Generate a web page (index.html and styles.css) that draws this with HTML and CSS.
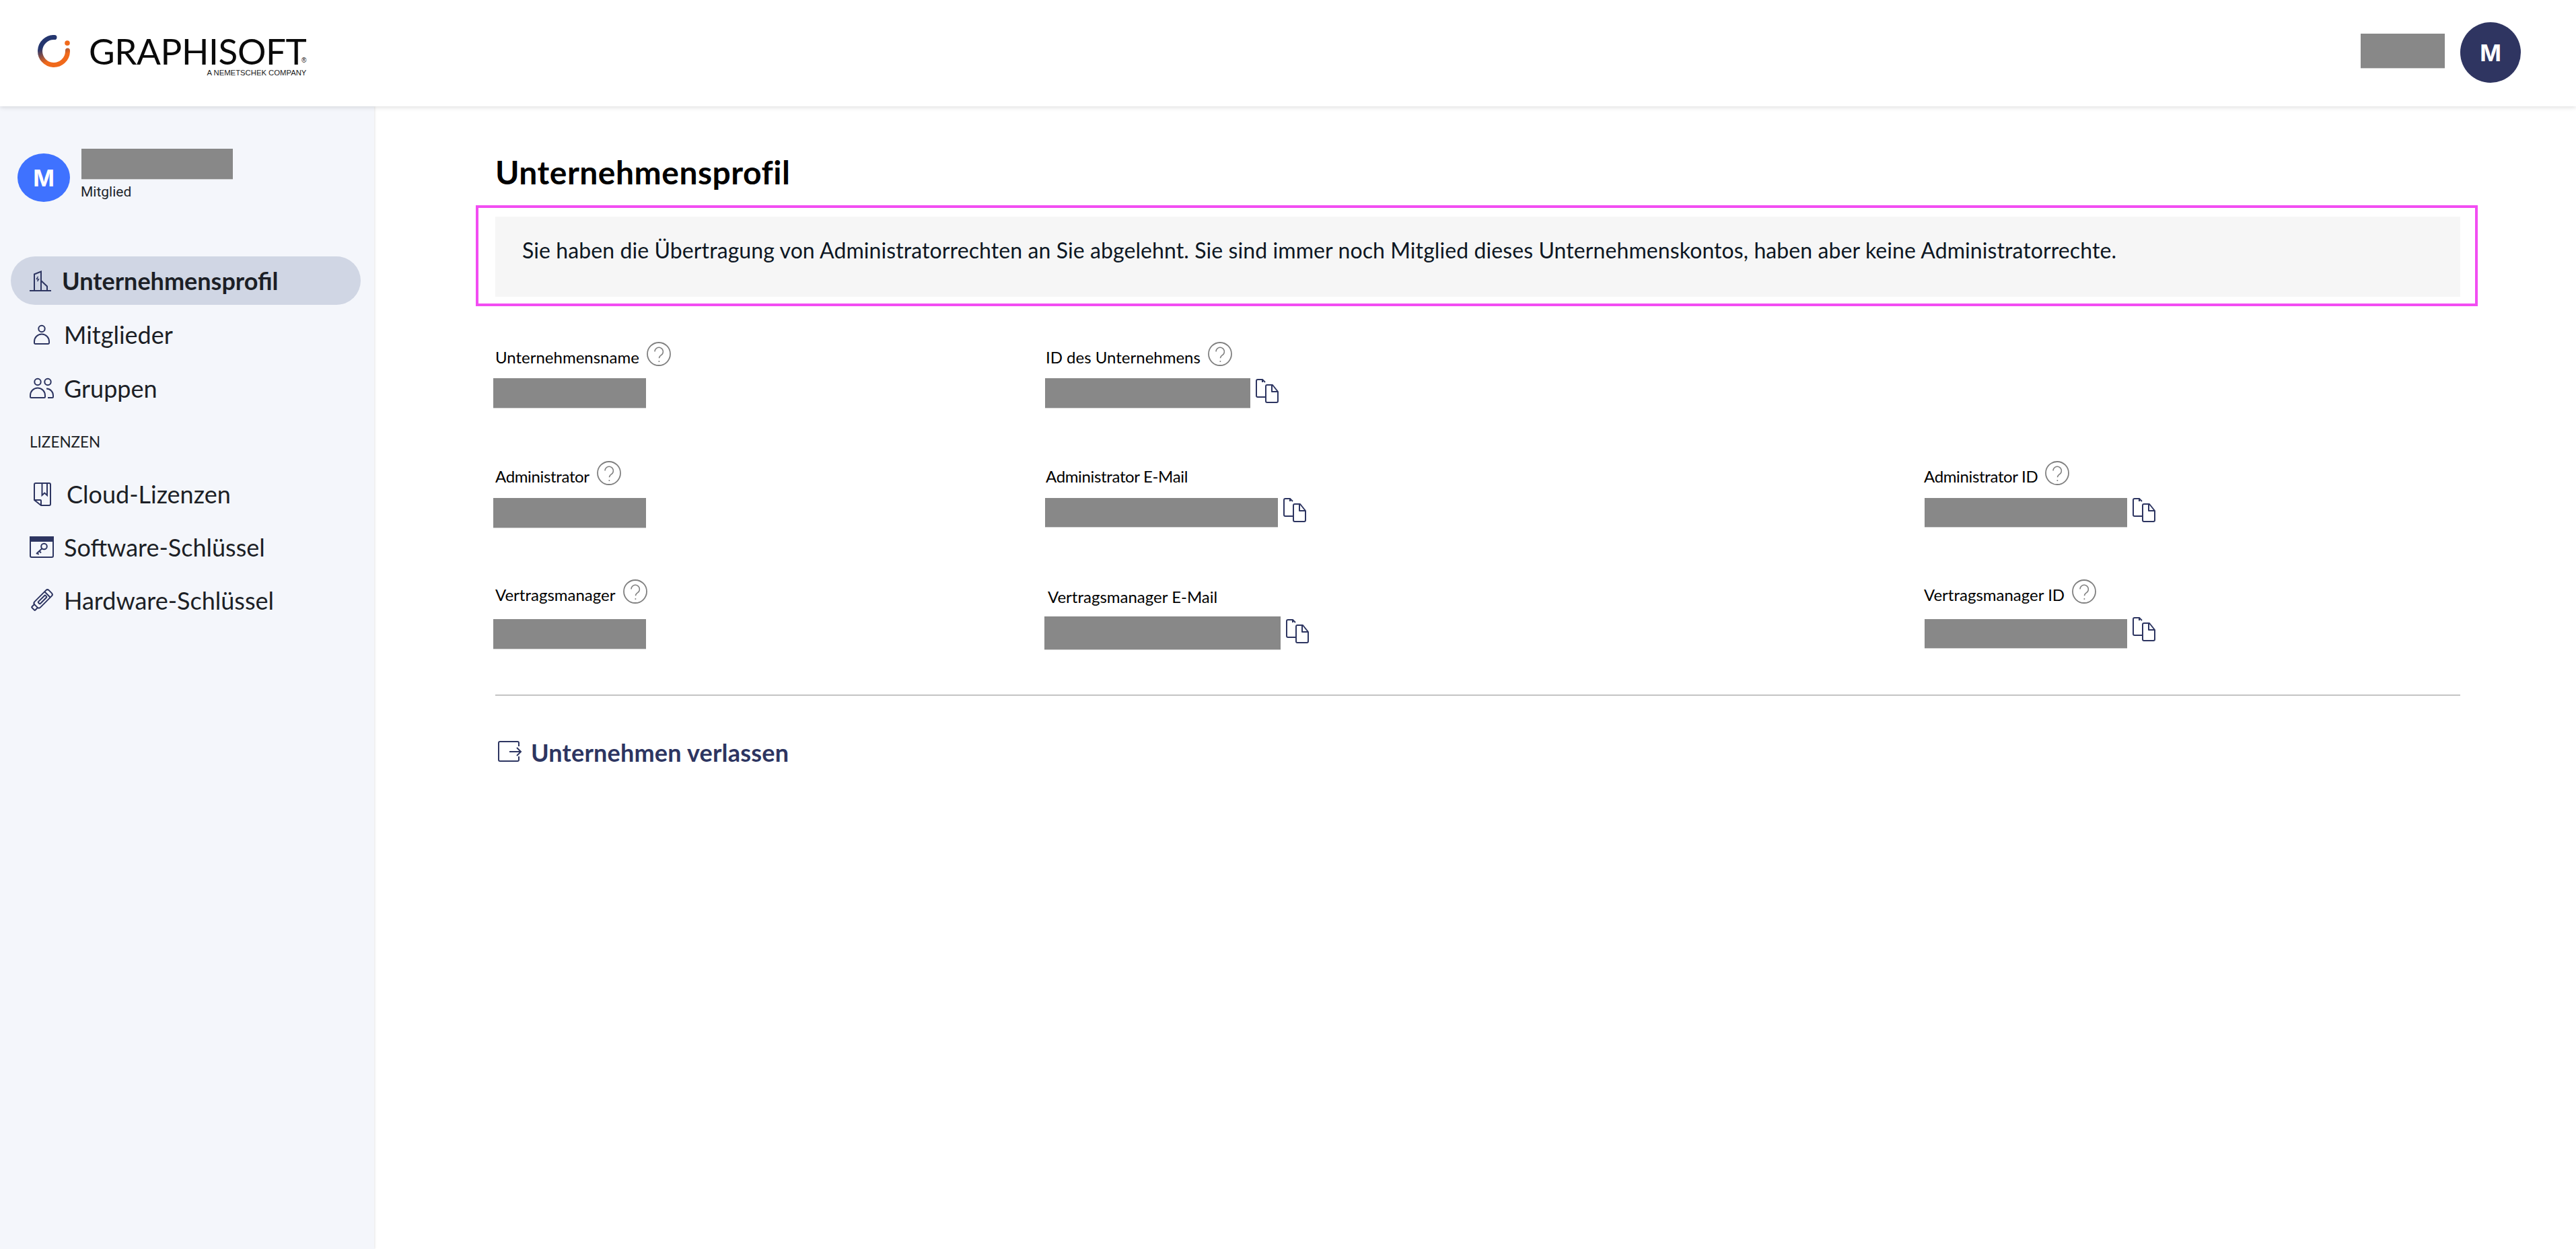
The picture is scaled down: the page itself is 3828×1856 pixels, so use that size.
FILE: index.html
```
<!doctype html>
<html lang="de">
<head>
<meta charset="utf-8">
<title>Unternehmensprofil</title>
<link rel="stylesheet" href="styles.css">
</head>
<body>
<svg class="defs" width="0" height="0" aria-hidden="true">
  <defs>
    <symbol id="help" viewBox="0 0 36 36">
      <circle cx="18" cy="18" r="17" fill="none" stroke="#808080" stroke-width="1.8"/>
      <path d="M12 14.500a6.200 6.200 0 1 1 9.600 5.200c-2 1.300-3.100 2.400-3.100 4.600" fill="none" stroke="#808080" stroke-width="1.500"/>
      <circle cx="18.400" cy="29" r="1" fill="#808080"/>
    </symbol>
    <symbol id="copy" viewBox="0 0 34 36">
      <g fill="none" stroke="#2d3561" stroke-width="2" stroke-linejoin="round">
        <path d="M10 5V1H3a2 2 0 0 0-2 2v22a2 2 0 0 0 2 2h11"/>
        <path d="M10 1l4 4"/>
        <path d="M15 11a2 2 0 0 1 2-2h8l8 10v14a2 2 0 0 1-2 2H17a2 2 0 0 1-2-2z"/>
        <path d="M24 9v10h9"/>
      </g>
    </symbol>
  </defs>
</svg>

<header class="topbar">
  <a class="logo">
    <svg class="logo__mark" viewBox="0 0 48 48" width="48" height="48">
      <defs>
        <linearGradient id="arc" gradientUnits="userSpaceOnUse" x1="10" y1="10" x2="24" y2="42">
          <stop offset="0.2" stop-color="#24366f"/>
          <stop offset="0.85" stop-color="#f0691b"/>
        </linearGradient>
      </defs>
      <path d="M25 3.500A20.500 20.500 0 1 0 44.500 25V23" fill="none" stroke="url(#arc)" stroke-width="7" stroke-linecap="round"/>
      <circle cx="44" cy="12" r="3.800" fill="#f0691b"/>
    </svg>
    <span class="logo__text">
      <span class="logo__name">GRAPHISOFT<span class="logo__reg">®</span></span>
      <span class="logo__sub">A NEMETSCHEK COMPANY</span>
    </span>
  </a>
  <div class="account">
    <span class="redact redact--account"></span>
    <span class="avatar avatar--navy">M</span>
  </div>
</header>

<div class="shell">
  <aside class="sidebar">
    <div class="profile">
      <span class="avatar avatar--blue">M</span>
      <div class="profile__text">
        <span class="redact redact--user"></span>
        <span class="profile__role">Mitglied</span>
      </div>
    </div>

    <nav class="nav">
      <a class="nav__item nav__item--active">
        <span class="nav__slot nav__slot--narrow">
          <svg class="ico" viewBox="0 0 32 31" width="32" height="31"><path d="M0 30h32M7 30V5.500L17 1.500V30M17 15l9 8.500V30"/><path class="ico__thin" d="M12.500 9L10.500 12.500l3 .5-2 3"/></svg>
        </span>
        <span>Unternehmensprofil</span>
      </a>
      <a class="nav__item">
        <span class="nav__slot">
          <svg class="ico ico--inset" viewBox="0 0 24 29" width="24" height="29"><circle cx="12" cy="5.500" r="4.700"/><path d="M2.500 28h19a1.500 1.500 0 0 0 1.500-1.500v-2a11 11 0 0 0-22 0v2a1.500 1.500 0 0 0 1.500 1.500z"/></svg>
        </span>
        <span>Mitglieder</span>
      </a>
      <a class="nav__item nav__item--tight">
        <span class="nav__slot">
          <svg class="ico" viewBox="0 0 36 30" width="36" height="30"><circle cx="12" cy="5.500" r="4.700"/><circle cx="27" cy="5.500" r="4.700"/><path d="M2.500 29h19a1.500 1.500 0 0 0 1.500-1.500v-2a11 11 0 0 0-22 0v2a1.500 1.500 0 0 0 1.500 1.500z"/><path d="M25 15.500a10 10 0 0 1 10 10v2a1.500 1.500 0 0 1-1.500 1.500H27"/></svg>
        </span>
        <span>Gruppen</span>
      </a>

      <div class="nav__section">LIZENZEN</div>

      <a class="nav__item nav__item--tight">
        <span class="nav__slot nav__slot--wide">
          <svg class="ico ico--inset" viewBox="0 0 26 36" width="26" height="36"><path d="M3 2h20a2 2 0 0 1 2 2v29a2 2 0 0 1-2 2H11L1 27V4a2 2 0 0 1 2-2z"/><path d="M1 27h9a1 1 0 0 1 1 1v7"/><path d="M12.500 2v18l3.750-3.500L20 20V1"/></svg>
        </span>
        <span>Cloud-Lizenzen</span>
      </a>
      <a class="nav__item nav__item--tight">
        <span class="nav__slot">
          <svg class="ico" viewBox="0 0 36 32" width="36" height="32"><rect x="1" y="1" width="34" height="30" rx="2"/><rect class="ico__fill" x="1" y="1" width="34" height="6"/><circle cx="21.500" cy="15" r="4.300"/><path d="M18.500 18l-8.500 8M14.500 22l2.500 2.500M11.500 25l2 2"/></svg>
        </span>
        <span>Software-Schlüssel</span>
      </a>
      <a class="nav__item nav__item--tight">
        <span class="nav__slot">
          <svg class="ico ico--nudge" viewBox="0 0 32 32" width="32" height="32"><g transform="rotate(-45 16 16)"><rect x="4" y="10" width="30" height="12" rx="3"/><path d="M4 12.500H-1a1 1 0 0 0-1 1v5a1 1 0 0 0 1 1h5"/><rect x="10" y="14" width="15" height="4" rx="1"/><path d="M28 10v12"/></g></svg>
        </span>
        <span>Hardware-Schlüssel</span>
      </a>
    </nav>
  </aside>

  <main class="content">
    <h1 class="content__title">Unternehmensprofil</h1>

    <div class="highlight">
      <div class="notice">Sie haben die Übertragung von Administratorrechten an Sie abgelehnt. Sie sind immer noch Mitglied dieses Unternehmenskontos, haben aber keine Administratorrechte.</div>
    </div>

    <section class="fields">
      <div class="field field--top">
        <div class="field__head"><span class="field__label">Unternehmensname</span><svg class="help"><use href="#help"/></svg></div>
        <div class="field__value"><span class="redact redact--name"></span></div>
      </div>
      <div class="field field--top field--mid">
        <div class="field__head"><span class="field__label">ID des Unternehmens</span><svg class="help"><use href="#help"/></svg></div>
        <div class="field__value"><span class="redact redact--id"></span><svg class="copy copy--down"><use href="#copy"/></svg></div>
      </div>
      <div class="field field--last"></div>

      <div class="field">
        <div class="field__head"><span class="field__label field__label--tight">Administrator</span><svg class="help"><use href="#help"/></svg></div>
        <div class="field__value"><span class="redact redact--name"></span></div>
      </div>
      <div class="field field--mid">
        <div class="field__head"><span class="field__label field__label--tight">Administrator E-Mail</span></div>
        <div class="field__value"><span class="redact redact--mail"></span><svg class="copy"><use href="#copy"/></svg></div>
      </div>
      <div class="field field--last">
        <div class="field__head"><span class="field__label field__label--tight">Administrator ID</span><svg class="help"><use href="#help"/></svg></div>
        <div class="field__value"><span class="redact redact--uid"></span><svg class="copy"><use href="#copy"/></svg></div>
      </div>

      <div class="field field--low">
        <div class="field__head"><span class="field__label">Vertragsmanager</span><svg class="help"><use href="#help"/></svg></div>
        <div class="field__value"><span class="redact redact--name"></span></div>
      </div>
      <div class="field field--mid field--offset">
        <div class="field__head"><span class="field__label">Vertragsmanager E-Mail</span></div>
        <div class="field__value"><span class="redact redact--vmail"></span><svg class="copy copy--vmail"><use href="#copy"/></svg></div>
      </div>
      <div class="field field--last field--low">
        <div class="field__head"><span class="field__label">Vertragsmanager ID</span><svg class="help"><use href="#help"/></svg></div>
        <div class="field__value"><span class="redact redact--uid"></span><svg class="copy copy--up"><use href="#copy"/></svg></div>
      </div>
    </section>

    <hr class="divider">

    <a class="leave">
      <svg class="ico leave__ico" viewBox="0 0 35 32" width="35" height="32"><path d="M31 8V3a2 2 0 0 0-2-2H3a2 2 0 0 0-2 2v25a2 2 0 0 0 2 2h26a2 2 0 0 0 2-2v-5"/><path d="M17 16h17M28 10l6 6-6 6"/></svg>
      <span>Unternehmen verlassen</span>
    </a>
  </main>
</div>
</body>
</html>
```
FILE: styles.css
```
* { box-sizing: border-box; }
html, body { margin: 0; height: 100%; }
body {
  background: #fff;
  color: #1c1f26;
  font-family: "Lato", "Liberation Sans", sans-serif;
  overflow: hidden;
}
.defs { display: block; height: 0; }

/* top bar */
.topbar {
  position: relative;
  z-index: 2;
  height: 158px;
  display: flex;
  justify-content: space-between;
  align-items: flex-start;
  padding: 33px 82px 0 56px;
  background: #fff;
  box-shadow: 0 2px 6px rgba(0, 0, 0, .12);
}
.logo { display: flex; align-items: flex-start; margin-top: 19px; }
.logo__mark { flex: none; }
.logo__text { display: flex; flex-direction: column; align-items: flex-end; margin: -2px 0 0 28px; }
.logo__name {
  position: relative;
  font-size: 53px;
  line-height: 52px;
  letter-spacing: -.4px;
  color: #0a0a0a;
  font-weight: 400;
}
.logo__reg {
  position: absolute;
  right: 0;
  top: 34px;
  font-size: 10px;
  line-height: 12px;
  letter-spacing: 0;
  font-family: "Liberation Sans", sans-serif;
}
.logo__sub {
  font-family: "Liberation Sans", sans-serif;
  font-size: 11.300px;
  line-height: 12px;
  color: #1a1a1a;
}
.account { display: flex; align-items: flex-start; gap: 23px; }

/* shared */
.redact { display: block; flex: none; background: #888; box-shadow: 0 1px 0 #d4d4d4; }
.redact--account { width: 125px; height: 51px; margin-top: 17px; }
.redact--user { width: 225px; height: 45px; }
.redact--name { width: 227px; height: 44px; }
.redact--id { width: 305px; height: 44px; }
.redact--mail { width: 346px; height: 43px; }
.redact--uid { width: 301px; height: 43px; }
.redact--vmail { width: 351px; height: 49px; }

.avatar {
  display: flex;
  flex: none;
  align-items: center;
  justify-content: center;
  border-radius: 50%;
  color: #fff;
  font-family: "Inter", sans-serif;
  font-weight: 700;
}
.avatar--navy { width: 90px; height: 90px; background: #2f3561; font-size: 34px; }
.avatar--blue { width: 78px; height: 72px; margin-top: 7px; background: #3f72ff; font-size: 34px; }

.shell { display: flex; height: calc(100vh - 158px); }

/* sidebar */
.sidebar {
  flex: none;
  width: 556px;
  padding: 63px 20px 0 16px;
  background: #f4f6fb;
  box-shadow: 1px 0 3px rgba(0, 0, 0, .1);
}
.profile { display: flex; align-items: flex-start; gap: 16px; padding-left: 10px; }
.profile__text { display: flex; flex-direction: column; margin-left: 1px; }
.profile__role { font-family: "Roboto", sans-serif; font-size: 21px; line-height: 38px; margin-left: -1px; color: #22252b; }

.nav { display: flex; flex-direction: column; margin-top: 77px; }
.nav__item {
  display: flex;
  align-items: center;
  height: 72px;
  margin-bottom: 8px;
  padding-left: 28px;
  border-radius: 36px;
  font-size: 36px;
  color: #1c1f26;
}
.nav__item--tight { margin-bottom: 7px; }
.nav__item--active { background: #d0d6e4; font-weight: 700; }
.nav__slot { display: flex; align-items: center; width: 51px; flex: none; }
.nav__slot--narrow { width: 48px; }
.nav__slot--wide { width: 55px; }
.nav__section {
  height: 22px;
  margin: 26px 0 30px 28px;
  font-size: 22.500px;
  line-height: 22px;
  color: #1c1f26;
}

.ico { display: block; flex: none; overflow: visible; fill: none; stroke: #2d3561; stroke-width: 2; }
.ico__fill { fill: #2d3561; }
.ico__thin { stroke-width: 1.400; }
.ico--inset { margin-left: 6px; }
.ico--nudge { margin-left: 2px; }

/* content */
.content { flex: 1; min-width: 0; padding: 68px 172px 0 180px; }
.content__title {
  margin: 0 0 19px;
  font-size: 48px;
  line-height: 60px;
  font-weight: 700;
  letter-spacing: .5px;
  color: #000;
}
.highlight {
  margin: 0 -26px 0 -29px;
  padding: 13px 22px 10px 25px;
  border: 4px solid #f24df2;
}
.notice {
  height: 119px;
  padding: 31px 40px 0;
  background: #f6f6f6;
  font-size: 32px;
  line-height: 38px;
  letter-spacing: .09px;
  color: #0d1723;
}

.fields {
  display: grid;
  grid-template-columns: 818px 1305px 1fr;
  grid-template-rows: 177px 176px 171px;
  margin-top: 53px;
}
.field { min-width: 0; }
.field__head { display: flex; align-items: flex-start; gap: 11px; height: 55px; }
.field--top .field__head { height: 54px; }
.field--low .field__head { height: 59px; }
.field__label { margin-top: 8px; font-size: 24px; line-height: 30px; color: #000; white-space: nowrap; }
.field__label--tight { letter-spacing: -.35px; }
.field--offset .field__head { height: 55px; padding-left: 3px; }
.field--offset .field__label { margin-top: 11px; }
.help { flex: none; width: 36px; height: 36px; }
.field__value { display: flex; align-items: flex-start; gap: 8px; margin-left: -3px; }
.field--mid .field__value { margin-left: -1px; }
.field--last .field__value { margin-left: 1px; }
.field--offset .field__value { margin-left: -2px; }
.copy { flex: none; width: 34px; height: 36px; }
.copy--down { margin-top: 1px; }
.copy--up { margin-top: -3px; }
.copy--vmail { margin-top: 4px; }

.divider { height: 2px; margin: 0; border: 0; background: #c4c4c4; }

.leave {
  display: flex;
  align-items: center;
  gap: 14px;
  height: 36px;
  margin: 66px 0 0 4px;
  font-size: 36px;
  font-weight: 700;
  letter-spacing: .2px;
  color: #2d3561;
}
.leave__ico { margin-top: -2px; }
```
